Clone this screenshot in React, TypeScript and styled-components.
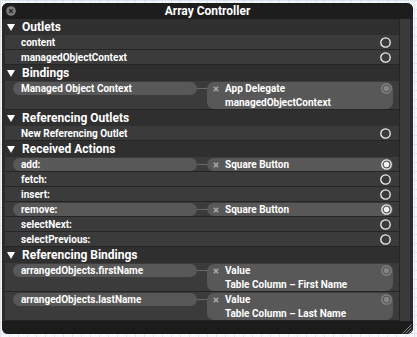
import * as React from 'react';
import styled, {createGlobalStyle} from 'styled-components';

type Dot = 'open' | 'connected' | 'bound';

interface Connection {
  source: string;
  target?: string;
  detail?: string;
  dot: Dot;
}

interface Section {
  title: string;
  rows: Connection[];
}

const sections: Section[] = [
  {
    title: 'Outlets',
    rows: [
      {source: 'content', dot: 'open'},
      {source: 'managedObjectContext', dot: 'open'},
    ],
  },
  {
    title: 'Bindings',
    rows: [
      {
        source: 'Managed Object Context',
        target: 'App Delegate',
        detail: 'managedObjectContext',
        dot: 'bound',
      },
    ],
  },
  {
    title: 'Referencing Outlets',
    rows: [{source: 'New Referencing Outlet', dot: 'open'}],
  },
  {
    title: 'Received Actions',
    rows: [
      {source: 'add:', target: 'Square Button', dot: 'connected'},
      {source: 'fetch:', dot: 'open'},
      {source: 'insert:', dot: 'open'},
      {source: 'remove:', target: 'Square Button', dot: 'connected'},
      {source: 'selectNext:', dot: 'open'},
      {source: 'selectPrevious:', dot: 'open'},
    ],
  },
  {
    title: 'Referencing Bindings',
    rows: [
      {
        source: 'arrangedObjects.firstName',
        target: 'Value',
        detail: 'Table Column – First Name',
        dot: 'bound',
      },
      {
        source: 'arrangedObjects.lastName',
        target: 'Value',
        detail: 'Table Column – Last Name',
        dot: 'bound',
      },
    ],
  },
];

const Socket = ({kind}: {kind: Dot}) => {
  const color = kind === 'bound' ? '#858585' : '#f2f2f2';
  return (
    <SocketIcon width="11" height="11" viewBox="0 0 11 11">
      <circle cx="5.5" cy="5.5" r="4.7" fill="none" stroke={color} strokeWidth="1.3" />
      {kind !== 'open' && <circle cx="5.5" cy="5.5" r="2.7" fill={color} />}
    </SocketIcon>
  );
};

const Cross = () => (
  <CrossIcon width="6" height="6" viewBox="0 0 6 6">
    <path d="M0.8 0.8 L5.2 5.2 M5.2 0.8 L0.8 5.2" stroke="#a8a8a8" strokeWidth="1.6" />
  </CrossIcon>
);

const renderRow = (row: Connection): JSX.Element => {
  const tall = Boolean(row.detail);
  if (!row.target) {
    return (
      <Row key={row.source}>
        <Label>{row.source}</Label>
        <Socket kind={row.dot} />
      </Row>
    );
  }
  return (
    <Row key={row.source} $tall={tall}>
      <SourcePill>{row.source}</SourcePill>
      <Connector />
      <TargetPill $tall={tall}>
        <Cross />
        <TargetText>{row.target}</TargetText>
        <Socket kind={row.dot} />
        {row.detail && <DetailText>{row.detail}</DetailText>}
      </TargetPill>
    </Row>
  );
};

export default function App(): JSX.Element {
  return (
    <>
      <GlobalStyle />
      <Panel>
        <TitleBar>
          <CloseButton width="10" height="10" viewBox="0 0 10 10">
            <circle cx="5" cy="5" r="4.8" fill="#7b7b7b" />
            <path d="M3.2 3.2 L6.8 6.8 M6.8 3.2 L3.2 6.8" stroke="#2a2a2a" strokeWidth="1.5" />
          </CloseButton>
          <Title>Array Controller</Title>
        </TitleBar>
        <Body>
          <List>
            {sections.map(section => (
              <React.Fragment key={section.title}>
                <SectionHeader>
                  <Disclosure />
                  {section.title}
                </SectionHeader>
                {section.rows.map(renderRow)}
              </React.Fragment>
            ))}
          </List>
          <Scroller />
        </Body>
        <Footer>
          <svg width="11" height="11" viewBox="0 0 11 11">
            <path d="M10.5 1.5 L1.5 10.5 M10.5 4.5 L4.5 10.5 M10.5 7.5 L7.5 10.5" stroke="#8c8c8c" strokeWidth="1" />
          </svg>
        </Footer>
      </Panel>
    </>
  );
}

const GlobalStyle = createGlobalStyle`
  html, body {
    margin: 0;
    padding: 0;
  }
  body {
    width: 417px;
    height: 337px;
    overflow: hidden;
    background-color: #f5f7fa;
    background-image:
      linear-gradient(#dde4ef 1px, transparent 1px),
      linear-gradient(90deg, #dde4ef 1px, transparent 1px);
    background-size: 9px 9px;
    font-family: Roboto, "Liberation Sans", Arial, sans-serif;
  }
`;

const Panel = styled.div`
  width: 411px;
  height: 331px;
  margin: 3px 0 0 2px;
  display: flex;
  flex-direction: column;
  background: #2b2b2b;
  border-radius: 6px;
  overflow: hidden;
  color: #fff;
  font-weight: bold;
`;

const TitleBar = styled.div`
  flex: 0 0 16px;
  display: grid;
  grid-template-columns: 20px 1fr 20px;
  align-items: center;
  background: #1d1d1d;
  font-size: 12px;
`;

const CloseButton = styled.svg`
  margin-left: 4px;
`;

const Title = styled.div`
  text-align: center;
  line-height: 16px;
`;

const Body = styled.div`
  flex: 1;
  display: flex;
  padding: 0 3px;
`;

const List = styled.div`
  flex: 1;
  display: flex;
  flex-direction: column;
`;

const Scroller = styled.div`
  width: 10px;
  border-left: 1px solid #252525;
  background: #3a3a3a;
`;

const Footer = styled.div`
  flex: 0 0 13px;
  display: flex;
  justify-content: flex-end;
  align-items: flex-end;
  padding: 0 1px 1px 0;
  background: #1c1c1c;
`;

const SectionHeader = styled.div`
  height: 16px;
  display: flex;
  align-items: center;
  gap: 7px;
  padding-left: 2px;
  background: #2f2f2f;
  font-size: 12px;
`;

const Disclosure = styled.span`
  width: 0;
  height: 0;
  border-left: 4px solid transparent;
  border-right: 4px solid transparent;
  border-top: 7px solid #fff;
`;

const Row = styled.div<{$tall?: boolean}>`
  height: ${p => (p.$tall ? 29 : 15)}px;
  box-sizing: border-box;
  display: flex;
  align-items: flex-start;
  padding: 1px 0 0 8px;
  border-bottom: 1px solid #252525;
  background: #3b3b3b;
  font-size: 10px;
`;

const Label = styled.div`
  flex: 1;
  padding-left: 8px;
  line-height: 13px;
`;

const SocketIcon = styled.svg`
  flex: none;
  margin: 1px 8px 0 0;
`;

const SourcePill = styled.div`
  flex: 0 0 184px;
  height: 13px;
  box-sizing: border-box;
  padding-left: 8px;
  border-radius: 7px;
  background: #585858;
  line-height: 13px;
`;

const Connector = styled.div`
  flex: 0 0 10px;
  height: 1px;
  margin-top: 6px;
  background: #6a6a6a;
`;

const TargetPill = styled.div<{$tall?: boolean}>`
  flex: 0 0 186px;
  height: ${p => (p.$tall ? 27 : 13)}px;
  box-sizing: border-box;
  display: grid;
  grid-template-columns: 6px 1fr 11px;
  grid-auto-rows: 13px;
  column-gap: 6px;
  align-items: center;
  padding: 0 1px 0 6px;
  border-radius: 7px;
  background: #585858;
  line-height: 13px;

  ${SocketIcon} {
    margin: 0;
  }
`;

const CrossIcon = styled.svg`
  display: block;
`;

const TargetText = styled.span`
  white-space: nowrap;
`;

const DetailText = styled.span`
  grid-column: 2 / 4;
  margin-top: 1px;
  white-space: nowrap;
`;
